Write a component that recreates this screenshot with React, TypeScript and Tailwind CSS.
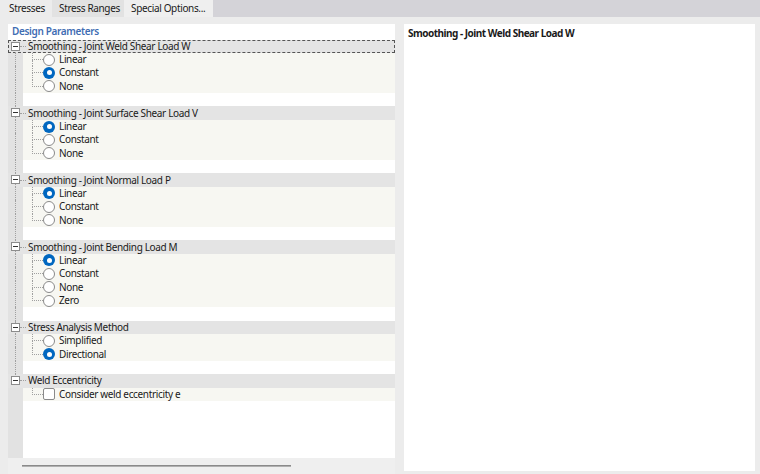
import React from "react";

type Item = { label: string; checked?: boolean };
type Group = { title: string; kind: "radio" | "check"; items: Item[] };

const GROUPS: Group[] = [
  {
    title: "Smoothing - Joint Weld Shear Load W",
    kind: "radio",
    items: [{ label: "Linear" }, { label: "Constant", checked: true }, { label: "None" }],
  },
  {
    title: "Smoothing - Joint Surface Shear Load V",
    kind: "radio",
    items: [{ label: "Linear", checked: true }, { label: "Constant" }, { label: "None" }],
  },
  {
    title: "Smoothing - Joint Normal Load P",
    kind: "radio",
    items: [{ label: "Linear", checked: true }, { label: "Constant" }, { label: "None" }],
  },
  {
    title: "Smoothing - Joint Bending Load M",
    kind: "radio",
    items: [{ label: "Linear", checked: true }, { label: "Constant" }, { label: "None" }, { label: "Zero" }],
  },
  {
    title: "Stress Analysis Method",
    kind: "radio",
    items: [{ label: "Simplified" }, { label: "Directional", checked: true }],
  },
  {
    title: "Weld Eccentricity",
    kind: "check",
    items: [{ label: "Consider weld eccentricity e" }],
  },
];

const Radio = ({ checked }: { checked?: boolean }) =>
  checked ? (
    <span className="w-[12px] h-[12px] rounded-full bg-[#0067c0] flex items-center justify-center shrink-0">
      <span className="w-[5px] h-[5px] rounded-full bg-white" />
    </span>
  ) : (
    <span className="w-[12px] h-[12px] rounded-full border border-[#8a8a8a] bg-white shrink-0" />
  );

const Check = () => (
  <span className="w-[12px] h-[12px] rounded-[2px] border border-[#8a8a8a] bg-white shrink-0" />
);

const Gutter = ({ line }: { line: boolean }) => (
  <div className="w-[15px] h-full bg-[#e2e2e2] shrink-0">
    <div className={`ml-[7px] h-full ${line ? "border-l border-dotted border-[#a0a0a0]" : ""}`} />
  </div>
);

const App = () => {
  return (
    <div
      className="w-[760px] h-[474px] bg-[#ececec] flex flex-col overflow-hidden text-[10px] leading-[13px] tracking-[-0.35px] text-[#1a1a1a]"
      style={{ fontFamily: '"Noto Sans", "Open Sans", sans-serif' }}
    >
      {/*------Tabs----------*/}
      <div className="h-[17px] bg-[#d4d3d8] flex shrink-0 whitespace-nowrap">
        <div className="w-[52px] bg-[#ececec] flex items-center pl-[9px]">Stresses</div>
        <div className="w-[72px] bg-[#e2e2e2] flex items-center pl-[7px]">Stress Ranges</div>
        <div className="w-[89px] bg-[#efefef] flex items-center pl-[7px]">Special Options...</div>
      </div>

      <div className="flex flex-1 pt-[7px]">
        {/*------Tree panel----------*/}
        <div className="ml-[8px] w-[387px] flex flex-col">
          <div className="flex-1 bg-white flex flex-col">
            <div className="h-[15.5px] flex items-center pl-[4px] text-[#3f6db3] font-semibold">
              Design Parameters
            </div>
            {GROUPS.map((g, gi) => {
              const first = gi === 0;
              const last = gi === GROUPS.length - 1;
              return (
                <div key={gi} className="flex flex-col">
                  <div
                    className={`h-[13.4px] flex items-center bg-[#e4e4e4] ${
                      first ? "outline outline-1 outline-dashed outline-[#555] -outline-offset-1" : ""
                    }`}
                  >
                    <div className="w-[15px] h-full shrink-0 flex flex-col relative">
                      <div className={`ml-[7px] flex-1 ${first ? "" : "border-l border-dotted border-[#a0a0a0]"}`} />
                      <div className={`ml-[7px] flex-1 ${last ? "" : "border-l border-dotted border-[#a0a0a0]"}`} />
                      <span className="absolute left-[3px] top-[2px] w-[9px] h-[9px] border border-[#8c8c8c] bg-white flex items-center justify-center">
                        <span className="w-[5px] h-px bg-[#333]" />
                      </span>
                    </div>
                    <div className="w-[6px] h-0 border-t border-dotted border-[#a0a0a0] -ml-[3px] mr-[1px]" />
                    <span className="ml-[1px] whitespace-nowrap">{g.title}</span>
                  </div>
                  {g.items.map((it, ii) => {
                    const lastItem = ii === g.items.length - 1;
                    return (
                      <div key={ii} className="h-[13.4px] flex">
                        <Gutter line={!last} />
                        <div className="flex-1 bg-[#f7f7f2] flex items-center">
                          <div className="w-[9px] h-full" />
                          <div className="w-[11px] h-full flex flex-col">
                            <div className="flex-1 border-l border-b border-dotted border-[#a0a0a0]" />
                            <div className={`flex-1 ${lastItem ? "" : "border-l border-dotted border-[#a0a0a0]"}`} />
                          </div>
                          {g.kind === "radio" ? <Radio checked={it.checked} /> : <Check />}
                          <span className="ml-[4px] whitespace-nowrap">{it.label}</span>
                        </div>
                      </div>
                    );
                  })}
                  {!last && (
                    <div className="h-[13.4px] flex">
                      <Gutter line />
                      <div className="flex-1 bg-white" />
                    </div>
                  )}
                </div>
              );
            })}
            <div className="flex-1 flex">
              <div className="w-[15px] bg-[#e2e2e2]" />
              <div className="flex-1 bg-white" />
            </div>
          </div>
          <div className="h-[16px] bg-[#efefef] flex items-center pl-[14px]">
            <div className="w-[269px] h-[2px] bg-[#8a8a8a] border-b border-[#b0b0b0]" />
          </div>
        </div>

        {/*------Description panel----------*/}
        <div className="ml-[9px] w-[351px] h-[447px] bg-white px-[4px] pt-[3px]">
          <div className="font-bold tracking-[-0.5px]">Smoothing - Joint Weld Shear Load W</div>
        </div>
      </div>
    </div>
  );
};

export default App;
